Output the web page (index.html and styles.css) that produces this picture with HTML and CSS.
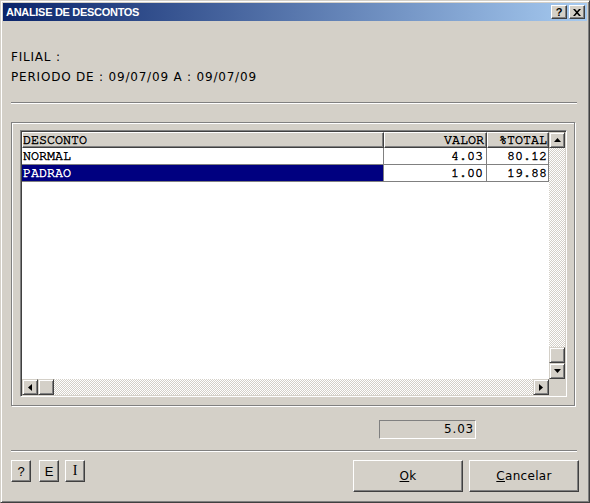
FILE: index.html
```html
<!DOCTYPE html>
<html>
<head>
<meta charset="utf-8">
<link rel="stylesheet" href="styles.css">
</head>
<body>
<div class="window">
  <div class="titlebar">
    <span class="title">ANALISE DE DESCONTOS</span>
    <div class="tb-btns">
      <span class="tb-btn help">?</span>
      <span class="tb-btn"><svg width="8" height="7" viewBox="0 0 8 7"><path d="M0 0h2l2 2.3L6 0h2L5 3.5 8 7H6L4 4.7 2 7H0l3-3.5z" fill="#000"/></svg></span>
    </div>
  </div>
  <div class="content">
    <div class="info">
      <div>FILIAL :</div>
      <div>PERIODO DE : 09/07/09 A : 09/07/09</div>
    </div>
    <div class="sep"></div>
    <div class="frame">
      <div class="grid">
        <div class="table">
          <div class="row head">
            <div class="c c1">DESCONTO</div>
            <div class="c c2">VALOR</div>
            <div class="c c3">%TOTAL</div>
          </div>
          <div class="row data">
            <div class="c c1">NORMAL</div>
            <div class="c c2">4.03</div>
            <div class="c c3">80.12</div>
          </div>
          <div class="row data">
            <div class="c c1 sel">PADRAO</div>
            <div class="c c2">1.00</div>
            <div class="c c3">19.88</div>
          </div>
        </div>
        <div class="vscroll">
          <div class="sbtn"><svg width="7" height="4" viewBox="0 0 7 4"><path d="M3.5 0L7 4H0z" fill="#000"/></svg></div>
          <div class="track"></div>
          <div class="sbtn"></div>
          <div class="sbtn"><svg width="7" height="4" viewBox="0 0 7 4"><path d="M0 0h7L3.5 4z" fill="#000"/></svg></div>
        </div>
        <div class="hscroll">
          <div class="sbtn"><svg width="4" height="7" viewBox="0 0 4 7"><path d="M4 0v7L0 3.5z" fill="#000"/></svg></div>
          <div class="sbtn"></div>
          <div class="track"></div>
          <div class="sbtn"><svg width="4" height="7" viewBox="0 0 4 7"><path d="M0 0l4 3.5L0 7z" fill="#000"/></svg></div>
        </div>
        <div class="corner"></div>
      </div>
    </div>
    <div class="total-row">
      <div class="total">5.03</div>
    </div>
    <div class="sep sep2"></div>
    <div class="actions">
      <div class="small-btns">
        <div class="btn small first">?</div>
        <div class="btn small">E</div>
        <div class="btn small mono">I</div>
      </div>
      <div class="main-btns">
        <div class="btn main"><span><u>O</u>k</span></div>
        <div class="btn main"><span><u>C</u>ancelar</span></div>
      </div>
    </div>
  </div>
</div>
</body>
</html>
```

FILE: styles.css
```css
html, body {
  margin: 0;
  padding: 0;
  background: #d4d0c8;
}

.window {
  width: 590px;
  height: 503px;
  box-sizing: border-box;
  border: 1px solid;
  border-color: #d4d0c8 #404040 #404040 #d4d0c8;
  box-shadow: inset 1px 1px #fff, inset -1px -1px #808080;
  padding: 2px;
  display: flex;
  flex-direction: column;
  background: #d4d0c8;
}

.titlebar {
  height: 18px;
  flex: none;
  background: linear-gradient(to right, #0a246a, #a6caf0);
  display: flex;
  align-items: center;
  padding: 0 2px 0 3px;
}

.title {
  flex: 1;
  color: #fff;
  font-family: "Liberation Sans", Arial, sans-serif;
  font-weight: bold;
  font-size: 11px;
  letter-spacing: -0.3px;
  white-space: nowrap;
}

.tb-btns {
  display: flex;
  gap: 2px;
}

.tb-btn {
  width: 16px;
  height: 14px;
  box-sizing: border-box;
  background: #d4d0c8;
  border: 1px solid;
  border-color: #fff #404040 #404040 #fff;
  box-shadow: inset -1px -1px #808080;
  display: flex;
  align-items: center;
  justify-content: center;
}

.tb-btn.help {
  font-family: "Liberation Sans", Arial, sans-serif;
  font-weight: bold;
  font-size: 11px;
  line-height: 12px;
  color: #000;
}

.content {
  flex: 1;
  padding: 0 10px 0 8px;
  font-family: "DejaVu Sans", Verdana, sans-serif;
  font-size: 12px;
  letter-spacing: 0.8px;
  color: #000;
}

.info {
  margin-top: 26px;
  line-height: 20px;
}

.sep {
  height: 1px;
  background: #808080;
  border-bottom: 1px solid #fff;
  margin-top: 15px;
}

.frame {
  margin-top: 18px;
  margin-right: 2px;
  border: 1px solid #808080;
  box-shadow: inset 1px 1px #fff, 1px 1px #fff;
  padding: 7px 7px 8px 8px;
}

.grid {
  height: 267px;
  box-sizing: border-box;
  border: 1px solid;
  border-color: #808080 #fff #fff #808080;
  box-shadow: inset 1px 1px #404040, inset -1px -1px #d4d0c8;
  padding: 1px;
  display: grid;
  grid-template-columns: 1fr 16px;
  grid-template-rows: 1fr 16px;
}

.table {
  background: #fff;
  overflow: hidden;
}

.row {
  display: flex;
  height: 17px;
}

.row.head {
  height: 16px;
}

.c {
  box-sizing: border-box;
  font-family: "Nimbus Mono PS", "Nimbus Mono L", "FreeMono", "Courier 10 Pitch", "Courier New", Courier, "Liberation Mono", monospace;
  font-size: 13.33px;
  letter-spacing: 0;
  white-space: nowrap;
  overflow: hidden;
  color: #000;
  -webkit-text-stroke: 0.45px currentColor;
}

.c1 { width: 362px; }
.c2 { width: 103px; text-align: right; }
.c3 { width: 62px; text-align: right; }

.head .c {
  background: #d4d0c8;
  border-top: 1px solid #fff;
  border-left: 1px solid #fff;
  border-right: 1px solid #404040;
  border-bottom: 1px solid #404040;
  box-shadow: inset -1px -1px #808080;
  line-height: 15px;
  padding: 0 1px 0 0;
}

.head .c2 { padding-right: 2px; }

.data .c {
  border-right: 1px solid #808080;
  border-bottom: 1px solid #808080;
  line-height: 17px;
  padding: 0 0 0 1px;
}

.data .c2 { padding-right: 3px; }
.data .c3 { padding-right: 1px; }

.data .sel {
  background: #000080;
  color: #fff;
}

.vscroll {
  display: flex;
  flex-direction: column;
}

.hscroll {
  display: flex;
}

.track {
  flex: 1;
  background: repeating-conic-gradient(#fff 0 25%, #d4d0c8 0 50%) 0 0 / 2px 2px;
}

.sbtn {
  width: 16px;
  height: 16px;
  flex: none;
  box-sizing: border-box;
  background: #d4d0c8;
  border: 1px solid;
  border-color: #d4d0c8 #404040 #404040 #d4d0c8;
  box-shadow: inset 1px 1px #fff, inset -1px -1px #808080;
  display: flex;
  align-items: center;
  justify-content: center;
}

.sbtn svg { display: block; }

.corner {
  background: #d4d0c8;
}

.total-row {
  margin-top: 14px;
  padding-left: 368px;
}

.total {
  width: 97px;
  height: 19px;
  box-sizing: border-box;
  border: 1px solid;
  border-color: #808080 #fff #fff #808080;
  text-align: right;
  padding-right: 1px;
  line-height: 17px;
}

.sep2 {
  margin-top: 11px;
}

.actions {
  display: flex;
  align-items: flex-start;
  margin-top: 8px;
  margin-right: -2px;
}

.small-btns {
  display: flex;
  gap: 6px;
}

.small-btns .first {
  margin-right: 2px;
}

.btn {
  box-sizing: border-box;
  background: #d4d0c8;
  border: 1px solid;
  border-color: #fff #404040 #404040 #fff;
  box-shadow: inset -1px -1px #808080;
  display: flex;
  align-items: center;
  justify-content: center;
  letter-spacing: 0.3px;
}

.btn.small {
  width: 20px;
  height: 22px;
  letter-spacing: 0;
  font-family: "Liberation Sans", Arial, sans-serif;
  font-size: 13px;
}

.btn.mono {
  font-family: "Liberation Serif", serif;
  font-size: 14px;
}

.main-btns {
  margin-left: auto;
  display: flex;
  gap: 6px;
}

.btn.main {
  width: 110px;
  height: 32px;
}
```
